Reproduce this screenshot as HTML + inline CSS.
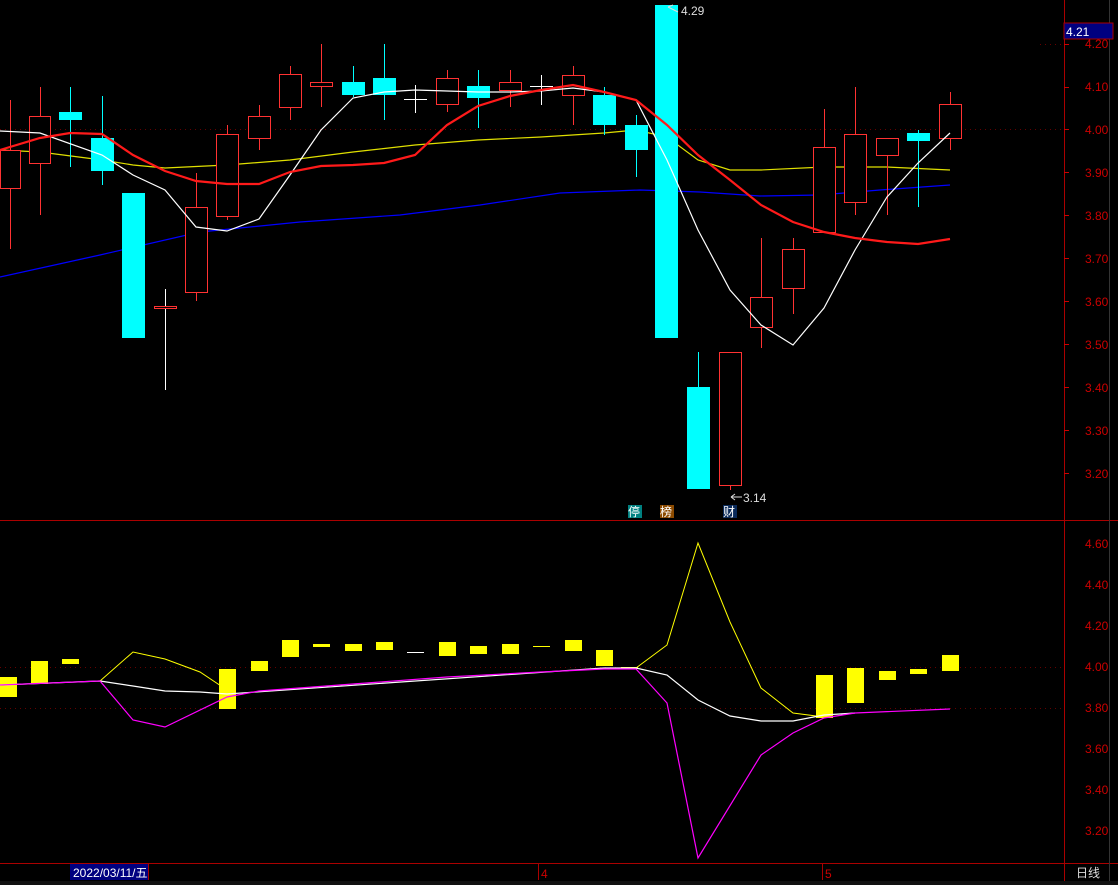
<!DOCTYPE html>
<html><head><meta charset="utf-8"><style>
html,body{margin:0;padding:0;background:#000;width:1118px;height:885px;overflow:hidden}
svg{display:block}
text{font-family:"Liberation Sans","Noto Sans CJK SC",sans-serif}
</style></head><body>
<svg width="1118" height="885" viewBox="0 0 1118 885" xmlns="http://www.w3.org/2000/svg">
<rect width="1118" height="885" fill="#000"/>
<!-- grid dotted -->
<g stroke="#600" stroke-dasharray="1,4" stroke-width="1">
<line x1="0" y1="129.5" x2="1064" y2="129.5"/>
<line x1="0" y1="667.5" x2="1064" y2="667.5"/>
<line x1="0" y1="708.5" x2="1064" y2="708.5"/>
<line x1="1040" y1="44.5" x2="1064" y2="44.5"/>
</g>
<!-- frame lines -->
<g stroke="#a00" stroke-width="1">
<line x1="0" y1="520.5" x2="1118" y2="520.5"/>
<line x1="0" y1="863.5" x2="1118" y2="863.5"/>
<line x1="1064.5" y1="0" x2="1064.5" y2="885"/>
<line x1="1109.5" y1="0" x2="1109.5" y2="885" stroke="#333"/>
</g>
<!-- right axis labels top -->
<g fill="#c00" font-size="12" >
<text x="1085" y="48">4.20</text><text x="1085" y="91">4.10</text><text x="1085" y="134">4.00</text>
<text x="1085" y="177">3.90</text><text x="1085" y="220">3.80</text><text x="1085" y="263">3.70</text>
<text x="1085" y="306">3.60</text><text x="1085" y="349">3.50</text><text x="1085" y="392">3.40</text>
<text x="1085" y="435">3.30</text><text x="1085" y="478">3.20</text>
<text x="1085" y="548">4.60</text><text x="1085" y="589">4.40</text><text x="1085" y="630">4.20</text>
<text x="1085" y="671">4.00</text><text x="1085" y="712">3.80</text><text x="1085" y="753">3.60</text>
<text x="1085" y="794">3.40</text><text x="1085" y="835">3.20</text>
</g>
<g stroke="#c00"><line x1="1064" y1="44.5" x2="1069" y2="44.5"/><line x1="1064" y1="87.5" x2="1069" y2="87.5"/><line x1="1064" y1="129.5" x2="1069" y2="129.5"/><line x1="1064" y1="172.5" x2="1069" y2="172.5"/><line x1="1064" y1="215.5" x2="1069" y2="215.5"/><line x1="1064" y1="258.5" x2="1069" y2="258.5"/><line x1="1064" y1="301.5" x2="1069" y2="301.5"/><line x1="1064" y1="344.5" x2="1069" y2="344.5"/><line x1="1064" y1="387.5" x2="1069" y2="387.5"/><line x1="1064" y1="430.5" x2="1069" y2="430.5"/><line x1="1064" y1="473.5" x2="1069" y2="473.5"/></g>
<rect x="1064" y="23" width="49" height="16" fill="#000080" stroke="#a00"/>
<text x="1066" y="36" fill="#fff" font-size="12">4.21</text>

<!-- blue MA -->
<polyline fill="none" stroke="#0000ff" stroke-width="1.2" points="0,277 100,255 200,232 300,222 400,215 480,205 560,193 640,190 700,192 760,196 820,195 880,190 950,185"/>
<!-- yellow MA -->
<polyline fill="none" stroke="#e0e000" stroke-width="1.2" points="0,150 40,152 102,160 133,165 165,168 227,165 290,160 353,152 415,145 478,140 541,137 604,133 636,130 667,137 698,160 730,170 761,170 824,167 887,167 950,170"/>

<!-- candles -->
<g stroke="#ff3232" fill="none" stroke-width="1">
<line x1="10.5" y1="100" x2="10.5" y2="249"/><rect x="0.5" y="150.5" width="20" height="38" fill="#000"/>
<line x1="40.5" y1="87" x2="40.5" y2="215"/><rect x="29.5" y="116.5" width="21" height="47" fill="#000"/>
<line x1="196.5" y1="173" x2="196.5" y2="301"/><rect x="185.5" y="207.5" width="22" height="85" fill="#000"/>
<line x1="227.5" y1="125" x2="227.5" y2="220"/><rect x="216.5" y="134.5" width="22" height="82" fill="#000"/>
<line x1="259.5" y1="105" x2="259.5" y2="150"/><rect x="248.5" y="116.5" width="22" height="22" fill="#000"/>
<line x1="290.5" y1="66" x2="290.5" y2="120"/><rect x="279.5" y="74.5" width="22" height="33" fill="#000"/>
<line x1="321.5" y1="44" x2="321.5" y2="107"/><rect x="310.5" y="82.5" width="22" height="4" fill="#000"/>
<line x1="447.5" y1="70" x2="447.5" y2="112"/><rect x="436.5" y="78.5" width="22" height="26" fill="#000"/>
<line x1="510.5" y1="70" x2="510.5" y2="107"/><rect x="499.5" y="82.5" width="22" height="8" fill="#000"/>
<line x1="573.5" y1="66" x2="573.5" y2="125"/><rect x="562.5" y="75.5" width="22" height="20" fill="#000"/>
<line x1="730.5" y1="352" x2="730.5" y2="490"/><rect x="719.5" y="352.5" width="22" height="133" fill="#000"/>
<line x1="761.5" y1="238" x2="761.5" y2="348"/><rect x="750.5" y="297.5" width="22" height="30" fill="#000"/>
<line x1="793.5" y1="238" x2="793.5" y2="314"/><rect x="782.5" y="249.5" width="22" height="39" fill="#000"/>
<line x1="824.5" y1="109" x2="824.5" y2="232"/><rect x="813.5" y="147.5" width="22" height="85" fill="#000"/>
<line x1="855.5" y1="87" x2="855.5" y2="215"/><rect x="844.5" y="134.5" width="22" height="68" fill="#000"/>
<line x1="887.5" y1="138" x2="887.5" y2="215"/><rect x="876.5" y="138.5" width="22" height="17" fill="#000"/>
<line x1="950.5" y1="92" x2="950.5" y2="150"/><rect x="939.5" y="104.5" width="22" height="34" fill="#000"/>
</g>
<g fill="#00ffff" stroke="#00ffff">
<line x1="70.5" y1="87" x2="70.5" y2="167"/><rect x="59" y="112" width="23" height="8" stroke="none"/>
<line x1="102.5" y1="96" x2="102.5" y2="185"/><rect x="91" y="138" width="23" height="33" stroke="none"/>
<rect x="122" y="193" width="23" height="145" stroke="none"/>
<line x1="353.5" y1="66" x2="353.5" y2="97"/><rect x="342" y="82" width="23" height="13" stroke="none"/>
<line x1="384.5" y1="44" x2="384.5" y2="120"/><rect x="373" y="78" width="23" height="17" stroke="none"/>
<line x1="478.5" y1="70" x2="478.5" y2="128"/><rect x="467" y="86" width="23" height="12" stroke="none"/>
<line x1="604.5" y1="87" x2="604.5" y2="135"/><rect x="593" y="95" width="23" height="30" stroke="none"/>
<line x1="636.5" y1="115" x2="636.5" y2="177"/><rect x="625" y="125" width="23" height="25" stroke="none"/>
<rect x="655" y="5" width="23" height="333" stroke="none"/>
<line x1="698.5" y1="352" x2="698.5" y2="390"/><rect x="687" y="387" width="23" height="102" stroke="none"/>
<line x1="918.5" y1="130" x2="918.5" y2="207"/><rect x="907" y="133" width="23" height="8" stroke="none"/>
</g>
<g stroke="#fff">
<line x1="165.5" y1="289" x2="165.5" y2="390"/><rect x="154.5" y="306.5" width="22" height="2" fill="#000" stroke="#ff3232"/>
<line x1="415.5" y1="85" x2="415.5" y2="113"/><line x1="404" y1="99.5" x2="427" y2="99.5"/>
<line x1="541.5" y1="75" x2="541.5" y2="105"/><line x1="530" y1="86.5" x2="553" y2="86.5"/>
</g>
<!-- white MA -->
<polyline fill="none" stroke="#fff" stroke-width="1.2" points="0,131 40,133 102,155 133,175 165,190 196,227 227,231 259,219 290,175 321,130 353,98 384,92 415,90 447,91 478,92 510,92 541,91 573,88 604,92 636,100 667,160 698,230 730,290 761,325 793,345 824,308 855,250 887,197 918,163 950,133"/>
<!-- red MA -->
<polyline fill="none" stroke="#ff1a1a" stroke-width="2.2" points="0,150 40,138 70,133 102,134 133,155 165,171 196,181 227,184 259,184 290,172 321,166 353,165 384,163 415,155 447,125 478,106 510,96 541,90 573,85 604,92 636,100 667,125 698,155 730,180 761,205 793,222 824,232 855,238 887,242 918,244 950,239"/>

<text x="681" y="15" fill="#ddd" font-size="12">4.29</text>
<path d="M668 7 l10 5 M668 7 l5 -2" stroke="#ddd" fill="none"/>
<text x="743" y="502" fill="#ddd" font-size="12">3.14</text>
<path d="M731 497 h11 M731 497 l4 -3 M731 497 l4 3" stroke="#ddd" fill="none"/>
<rect x="628" y="505" width="14" height="13" fill="#008080"/><text x="628" y="516" fill="#fff" font-size="12">停</text>
<rect x="660" y="505" width="14" height="13" fill="#8b4a00"/><text x="660" y="516" fill="#fff" font-size="12">榜</text>
<rect x="723" y="505" width="14" height="13" fill="#0a2a5a"/><text x="723" y="516" fill="#fff" font-size="12">财</text>

<!-- bottom panel bars -->
<g fill="#ffff00">
<rect x="0" y="677" width="17" height="20"/><rect x="31" y="661" width="17" height="23"/><rect x="62" y="659" width="17" height="5"/>
<rect x="219" y="669" width="17" height="40"/><rect x="251" y="661" width="17" height="10"/><rect x="282" y="640" width="17" height="17"/>
<rect x="313" y="644" width="17" height="3"/><rect x="345" y="644" width="17" height="7"/><rect x="376" y="642" width="17" height="8"/>
<rect x="407" y="652" width="17" height="1" fill="#fff"/><rect x="439" y="642" width="17" height="14"/><rect x="470" y="646" width="17" height="8"/>
<rect x="502" y="644" width="17" height="10"/><rect x="533" y="646" width="17" height="1"/><rect x="565" y="640" width="17" height="11"/>
<rect x="596" y="650" width="17" height="16"/><rect x="621" y="667" width="17" height="2"/>
<rect x="816" y="675" width="17" height="43"/><rect x="847" y="668" width="17" height="35"/><rect x="879" y="671" width="17" height="9"/>
<rect x="910" y="669" width="17" height="5"/><rect x="942" y="655" width="17" height="16"/>
</g>
<polyline fill="none" stroke="#ffff00" points="100,681 133,652 165,659 200,672 227,690"/>
<polyline fill="none" stroke="#ffff00" points="636,668 667,645 698,543 730,622 761,688 793,713 824,717"/>
<polyline fill="none" stroke="#fff" stroke-width="1.2" points="0,685 100,681 133,686 165,691 200,692 227,694 604,668 636,668 667,675 698,700 730,716 761,721 793,721 824,715 855,713"/>
<polyline fill="none" stroke="#ff00ff" stroke-width="1.2" points="0,685 100,681 133,720 165,727 227,697 259,691 353,684 447,677 541,672 604,669 636,669 667,703 698,858 761,755 793,733 824,718 855,713 950,709"/>

<!-- date bar -->
<rect x="70" y="864" width="78" height="16" fill="#000080"/>
<text x="73" y="877" fill="#fff" font-size="12">2022/03/11/五</text>
<line x1="148.5" y1="864" x2="148.5" y2="880" stroke="#a00"/>
<line x1="538.5" y1="864" x2="538.5" y2="880" stroke="#a00"/>
<text x="541" y="878" fill="#c00" font-size="12">4</text>
<line x1="822.5" y1="864" x2="822.5" y2="880" stroke="#a00"/>
<text x="825" y="878" fill="#c00" font-size="12">5</text>
<text x="1076" y="877" fill="#ddd" font-size="12">日线</text>
<rect x="0" y="881" width="1118" height="4" fill="#111"/>
</svg>
</body></html>
